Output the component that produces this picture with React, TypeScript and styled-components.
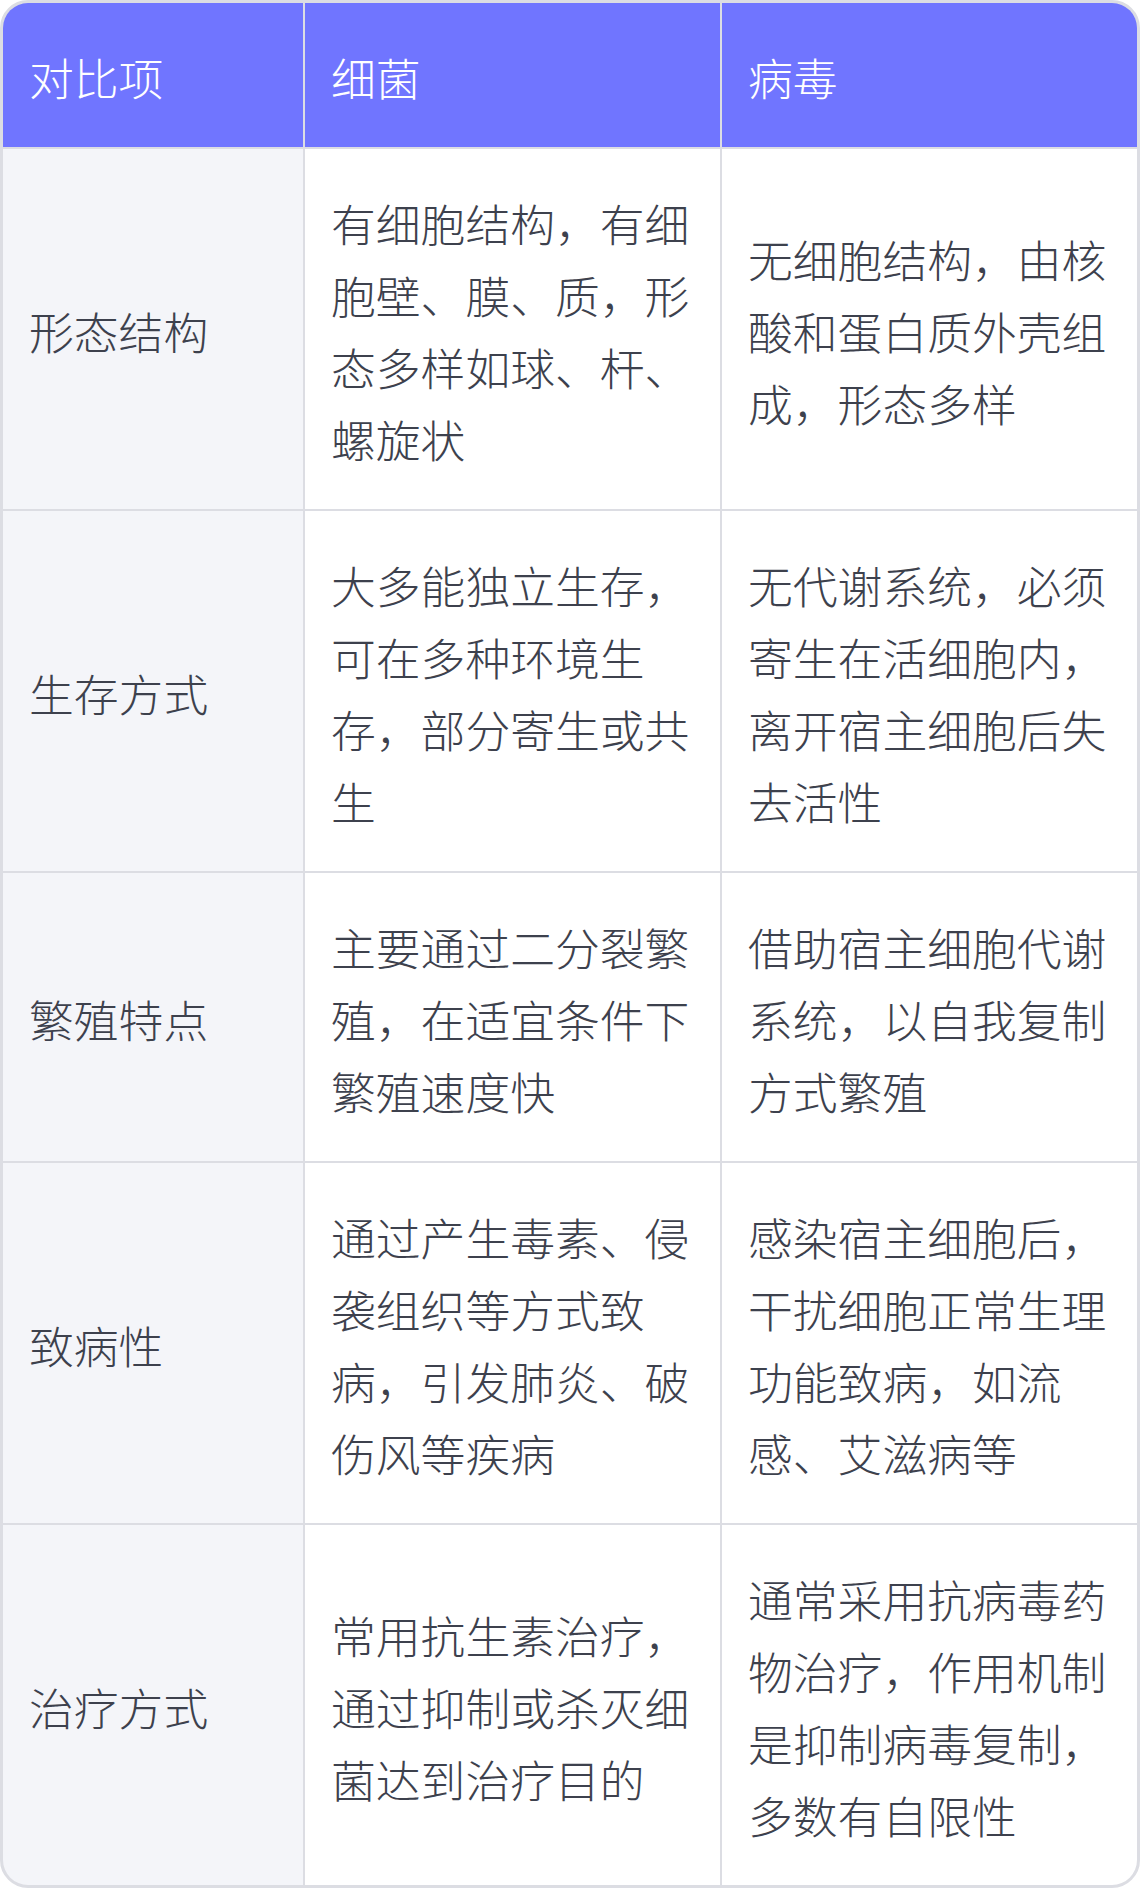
import React from 'react';
import styled, { createGlobalStyle } from 'styled-components';

interface CompareRow {
	label: string;
	bacteria: string;
	virus: string;
}

const rows: CompareRow[] = [
	{
		label: '形态结构',
		bacteria: '有细胞结构，有细胞壁、膜、质，形态多样如球、杆、螺旋状',
		virus: '无细胞结构，由核酸和蛋白质外壳组成，形态多样',
	},
	{
		label: '生存方式',
		bacteria: '大多能独立生存，可在多种环境生存，部分寄生或共生',
		virus: '无代谢系统，必须寄生在活细胞内，离开宿主细胞后失去活性',
	},
	{
		label: '繁殖特点',
		bacteria: '主要通过二分裂繁殖，在适宜条件下繁殖速度快',
		virus: '借助宿主细胞代谢系统，以自我复制方式繁殖',
	},
	{
		label: '致病性',
		bacteria: '通过产生毒素、侵袭组织等方式致病，引发肺炎、破伤风等疾病',
		virus: '感染宿主细胞后，干扰细胞正常生理功能致病，如流感、艾滋病等',
	},
	{
		label: '治疗方式',
		bacteria: '常用抗生素治疗，通过抑制或杀灭细菌达到治疗目的',
		virus: '通常采用抗病毒药物治疗，作用机制是抑制病毒复制，多数有自限性',
	},
];

const headers = ['对比项', '细菌', '病毒'];

export default function App() {
	return (
		<>
			<GlobalStyle />
			<Table>
				{headers.map((h) => (
					<HeadCell key={h}>{h}</HeadCell>
				))}
				{rows.map((row) => (
					<React.Fragment key={row.label}>
						<LabelCell>{row.label}</LabelCell>
						<Cell>{row.bacteria}</Cell>
						<Cell>{row.virus}</Cell>
					</React.Fragment>
				))}
			</Table>
		</>
	);
}

const GlobalStyle = createGlobalStyle`
	html, body {
		margin: 0;
		padding: 0;
		background: #ffffff;
	}
	body {
		font-family: "Noto Sans CJK SC", "Noto Sans", sans-serif;
	}
`

const Table = styled.div`
	display: grid;
	grid-template-columns: 300px 415px 415px;
	gap: 2px;
	width: 1140px;
	box-sizing: border-box;
	border: 3px solid #dcdde3;
	border-radius: 28px;
	overflow: hidden;
	background: #dcdde3;
`

const BaseCell = styled.div`
	display: flex;
	align-items: center;
	padding: 38px 28px 34px 26px;
	font-size: 44.8px;
	font-weight: 300;
	line-height: 72px;
	color: #3d414d;
	word-break: break-all;
	line-break: strict;
`

const HeadCell = styled(BaseCell)`
	background: #7075ff;
	color: #ffffff;
`

const LabelCell = styled(BaseCell)`
	background: #f4f5f9;
`

const Cell = styled(BaseCell)`
	background: #ffffff;
`
